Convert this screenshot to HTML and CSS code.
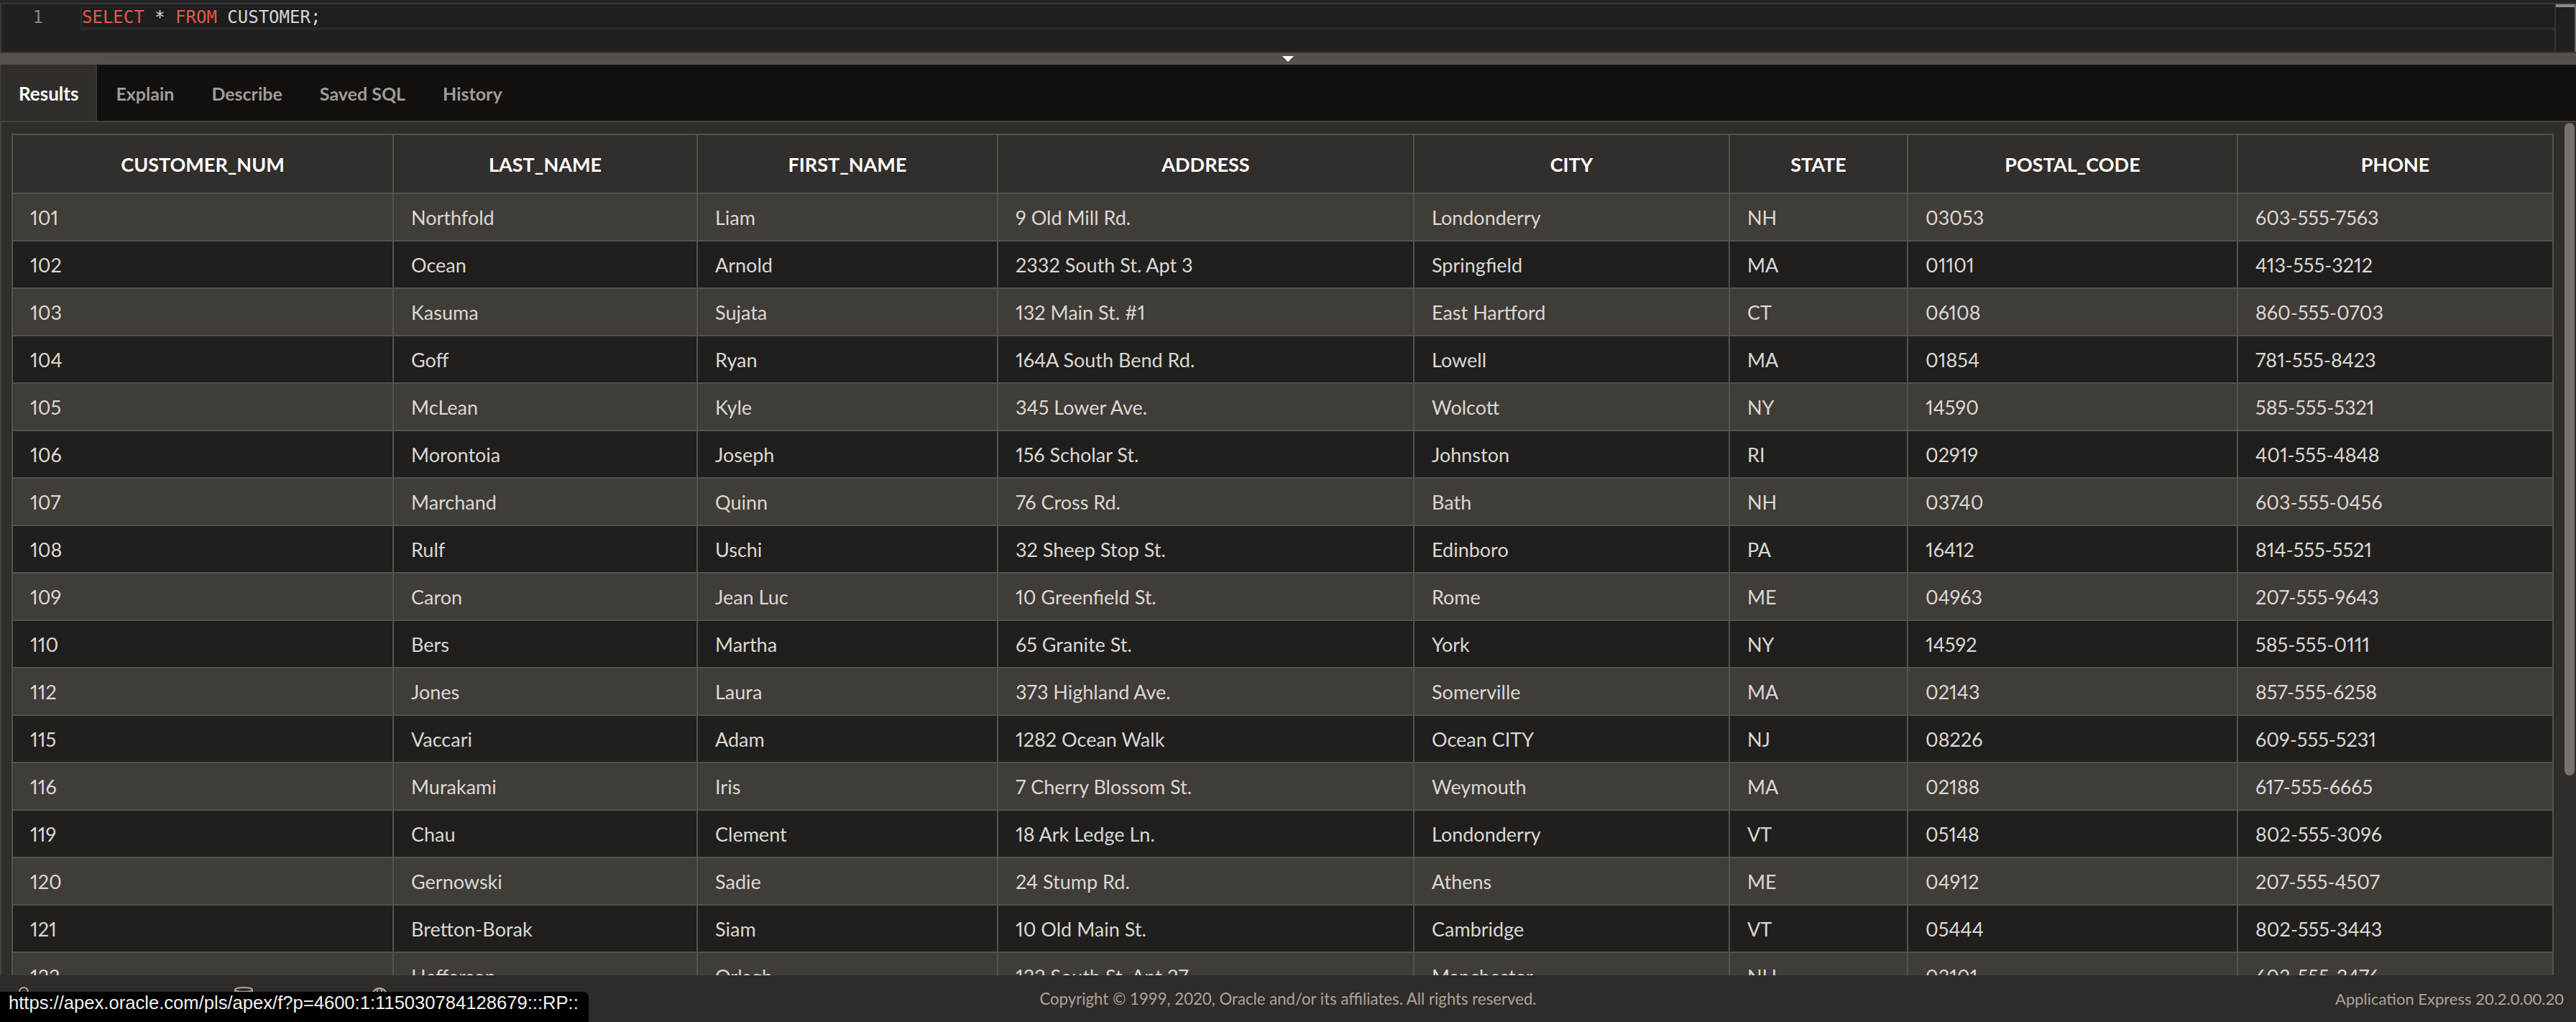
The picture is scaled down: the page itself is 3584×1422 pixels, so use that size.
FILE: index.html
```html
<!DOCTYPE html>
<html lang="en">
<head>
<meta charset="utf-8">
<title>SQL Commands</title>
<link rel="stylesheet" href="styles.css">
</head>
<body>
<div class="app">
  <div class="editor">
    <div class="editor-top"></div>
    <div class="editor-body">
      <div class="gutter"><div class="ln">1</div></div>
      <div class="code">
        <div class="line active"><span class="kw">SELECT</span> * <span class="kw">FROM</span> CUSTOMER;</div>
        <div class="line-band"></div>
      </div>
      <div class="ruler"><div class="ruler-mark"></div></div>
    </div>
  </div>
  <div class="splitter">
    <svg class="split-arrow" width="16" height="8" viewBox="0 0 16 8"><path d="M0 0 H16 L8 8 Z" fill="#ffffff"/></svg>
  </div>
  <div class="tabs">
    <div class="tab is-active">Results</div>
    <div class="tab">Explain</div>
    <div class="tab">Describe</div>
    <div class="tab">Saved SQL</div>
    <div class="tab">History</div>
  </div>
  <div class="results">
    <table class="grid">
      <colgroup>
        <col class="w1"><col class="w2"><col class="w3"><col class="w4"><col class="w5"><col class="w6"><col class="w7"><col class="w8">
      </colgroup>
      <thead>
        <tr><th>CUSTOMER_NUM</th><th>LAST_NAME</th><th>FIRST_NAME</th><th>ADDRESS</th><th>CITY</th><th>STATE</th><th>POSTAL_CODE</th><th>PHONE</th></tr>
      </thead>
      <tbody>
        <tr><td>101</td><td>Northfold</td><td>Liam</td><td>9 Old Mill Rd.</td><td>Londonderry</td><td>NH</td><td>03053</td><td>603-555-7563</td></tr>
        <tr><td>102</td><td>Ocean</td><td>Arnold</td><td>2332 South St. Apt 3</td><td>Springfield</td><td>MA</td><td>01101</td><td>413-555-3212</td></tr>
        <tr><td>103</td><td>Kasuma</td><td>Sujata</td><td>132 Main St. #1</td><td>East Hartford</td><td>CT</td><td>06108</td><td>860-555-0703</td></tr>
        <tr><td>104</td><td>Goff</td><td>Ryan</td><td>164A South Bend Rd.</td><td>Lowell</td><td>MA</td><td>01854</td><td>781-555-8423</td></tr>
        <tr><td>105</td><td>McLean</td><td>Kyle</td><td>345 Lower Ave.</td><td>Wolcott</td><td>NY</td><td>14590</td><td>585-555-5321</td></tr>
        <tr><td>106</td><td>Morontoia</td><td>Joseph</td><td>156 Scholar St.</td><td>Johnston</td><td>RI</td><td>02919</td><td>401-555-4848</td></tr>
        <tr><td>107</td><td>Marchand</td><td>Quinn</td><td>76 Cross Rd.</td><td>Bath</td><td>NH</td><td>03740</td><td>603-555-0456</td></tr>
        <tr><td>108</td><td>Rulf</td><td>Uschi</td><td>32 Sheep Stop St.</td><td>Edinboro</td><td>PA</td><td>16412</td><td>814-555-5521</td></tr>
        <tr><td>109</td><td>Caron</td><td>Jean Luc</td><td>10 Greenfield St.</td><td>Rome</td><td>ME</td><td>04963</td><td>207-555-9643</td></tr>
        <tr><td>110</td><td>Bers</td><td>Martha</td><td>65 Granite St.</td><td>York</td><td>NY</td><td>14592</td><td>585-555-0111</td></tr>
        <tr><td>112</td><td>Jones</td><td>Laura</td><td>373 Highland Ave.</td><td>Somerville</td><td>MA</td><td>02143</td><td>857-555-6258</td></tr>
        <tr><td>115</td><td>Vaccari</td><td>Adam</td><td>1282 Ocean Walk</td><td>Ocean CITY</td><td>NJ</td><td>08226</td><td>609-555-5231</td></tr>
        <tr><td>116</td><td>Murakami</td><td>Iris</td><td>7 Cherry Blossom St.</td><td>Weymouth</td><td>MA</td><td>02188</td><td>617-555-6665</td></tr>
        <tr><td>119</td><td>Chau</td><td>Clement</td><td>18 Ark Ledge Ln.</td><td>Londonderry</td><td>VT</td><td>05148</td><td>802-555-3096</td></tr>
        <tr><td>120</td><td>Gernowski</td><td>Sadie</td><td>24 Stump Rd.</td><td>Athens</td><td>ME</td><td>04912</td><td>207-555-4507</td></tr>
        <tr><td>121</td><td>Bretton-Borak</td><td>Siam</td><td>10 Old Main St.</td><td>Cambridge</td><td>VT</td><td>05444</td><td>802-555-3443</td></tr>
        <tr><td>122</td><td>Hefferson</td><td>Orlagh</td><td>132 South St. Apt 27</td><td>Manchester</td><td>NH</td><td>03101</td><td>603-555-3476</td></tr>
      </tbody>
    </table>
    <div class="thumb"></div>
  </div>
  <div class="footer">
    <div class="foot-left">
      <div class="foot-item fi-1">
        <svg width="20" height="22" viewBox="0 0 20 22"><circle cx="10" cy="7" r="6" fill="none" stroke="#a9a5a0" stroke-width="2"/><path d="M2 21 C2 15 18 15 18 21" fill="none" stroke="#a9a5a0" stroke-width="2"/></svg>
      </div>
      <div class="foot-item fi-2">
        <svg width="28" height="22" viewBox="0 0 28 22"><ellipse cx="14" cy="4" rx="12" ry="3" fill="none" stroke="#a9a5a0" stroke-width="2"/><path d="M2 4 V18 C2 22 26 22 26 18 V4" fill="none" stroke="#a9a5a0" stroke-width="2"/></svg>
      </div>
      <div class="foot-item fi-3">
        <svg width="24" height="24" viewBox="0 0 24 24"><circle cx="12" cy="12" r="10" fill="none" stroke="#a9a5a0" stroke-width="2"/><ellipse cx="12" cy="12" rx="4" ry="10" fill="none" stroke="#a9a5a0" stroke-width="2"/><path d="M2 12 H22" stroke="#a9a5a0" stroke-width="2"/></svg>
      </div>
    </div>
    <div class="copyright">Copyright © 1999, 2020, Oracle and/or its affiliates. All rights reserved.</div>
    <div class="version">Application Express 20.2.0.00.20</div>
  </div>
  <div class="status">https://apex.oracle.com/pls/apex/f?p=4600:1:115030784128679:::RP::</div>
</div>
</body>
</html>
```
FILE: styles.css
```css
html, body {
  margin: 0;
  padding: 0;
  background: #2f2b28;
  overflow: hidden;
}
body {
  font-family: Lato, "Open Sans", sans-serif;
}
.app {
  position: relative;
  width: 3584px;
  height: 1422px;
  display: flex;
  flex-direction: column;
}

/* editor */
.editor {
  height: 72px;
  display: flex;
  flex-direction: column;
  background: #202020;
}
.editor-top {
  height: 4px;
  background: #242424;
  border-bottom: 2px solid #383838;
}
.editor-body {
  flex: 1;
  display: flex;
  border-left: 2px solid #3a3a3a;
}
.gutter {
  width: 58px;
  padding-top: 4px;
  margin-right: 52px;
}
.ln {
  font-family: "DejaVu Sans Mono", monospace;
  font-size: 24px;
  line-height: 28px;
  color: #858585;
  text-align: right;
}
.code {
  flex: 1;
  padding-top: 4px;
}
.line {
  font-family: "DejaVu Sans Mono", monospace;
  font-size: 24px;
  line-height: 28px;
  height: 28px;
  color: #d6d6d6;
  white-space: pre;
}
.line.active {
  background: #1e1e1e;
  border-left: 2px solid #2c2c2c;
  box-shadow: inset 0 1px 0 #2a2a2a;
}
.kw {
  color: #e05a4b;
}
.line-band {
  height: 4px;
  background: #2a2a2a;
}
.ruler {
  width: 26px;
  border-left: 2px solid #333333;
  border-right: 2px solid #6d6d6d;
}
.ruler-mark {
  height: 4px;
  background: #8c8c8c;
}

/* splitter */
.splitter {
  height: 16px;
  border-top: 2px solid #3c3936;
  background: #56514c;
  display: flex;
  justify-content: center;
  align-items: flex-start;
}
.split-arrow {
  margin-top: 4px;
}

/* tabs */
.tabs {
  height: 78px;
  background: #11100e;
  border-bottom: 2px solid #45413c;
  display: flex;
}
.tab {
  padding: 0 26px;
  font-size: 25px;
  font-weight: 700;
  line-height: 80px;
  color: #a19d98;
}
.tab.is-active {
  background: #312d2a;
  color: #ffffff;
  font-size: 26px;
  border-right: 2px solid #3a3632;
  padding-right: 24px;
  border-left: 2px solid #3d3a36;
  padding-left: 24px;
}

/* results */
.results {
  position: relative;
  height: 1187px;
  background: #312d2a;
  border-left: 2px solid #46423e;
  box-sizing: border-box;
  padding: 16px 0 0 14px;
  overflow: hidden;
}
.grid {
  border-collapse: collapse;
  table-layout: fixed;
  width: 3537px;
}
.w1 { width: 530px; }
.w2 { width: 423px; }
.w3 { width: 418px; }
.w4 { width: 579px; }
.w5 { width: 439px; }
.w6 { width: 248px; }
.w7 { width: 459px; }
.w8 { width: 439px; }
.grid th, .grid td {
  border: 2px solid #55514c;
  padding: 0 24px;
  white-space: nowrap;
  overflow: hidden;
}
.grid th {
  height: 80px;
  background: #322e2b;
  color: #ffffff;
  font-size: 27px;
  font-weight: 700;
  text-align: center;
}
.grid td {
  height: 64px;
  color: #dad8d5;
  font-size: 27px;
  font-weight: 400;
  text-align: left;
  font-variant-numeric: proportional-nums;
}
.grid tbody tr:nth-child(odd) td {
  background: #403c38;
}
.grid tbody tr:nth-child(even) td {
  background: #201f1d;
}
.thumb {
  position: absolute;
  left: 3566px;
  top: 1px;
  width: 14px;
  height: 908px;
  border-radius: 7px;
  background: #77726d;
}

/* footer */
.footer {
  height: 65px;
  background: #2f2b28;
  display: grid;
  grid-template-columns: 1fr auto 1fr;
  align-items: center;
  font-size: 22px;
  color: #a9a5a0;
}
.foot-left {
  display: flex;
  align-items: flex-start;
  padding-left: 23px;
  align-self: start;
  padding-top: 16px;
}
.foot-item {
  display: flex;
}
.fi-1 { width: 302px; }
.fi-2 { width: 191px; }
.copyright {
  text-align: center;
  font-size: 22.2px;
}
.version {
  text-align: right;
  padding-right: 17px;
}

/* status bubble */
.status {
  position: absolute;
  left: 0;
  bottom: 0;
  height: 42px;
  padding: 0 14px 0 12px;
  background: #000000;
  border-top-right-radius: 8px;
  font-family: "Liberation Sans", Arial, sans-serif;
  font-size: 25.6px;
  line-height: 30px;
  color: #f2f2f2;
  box-sizing: border-box;
}
```
